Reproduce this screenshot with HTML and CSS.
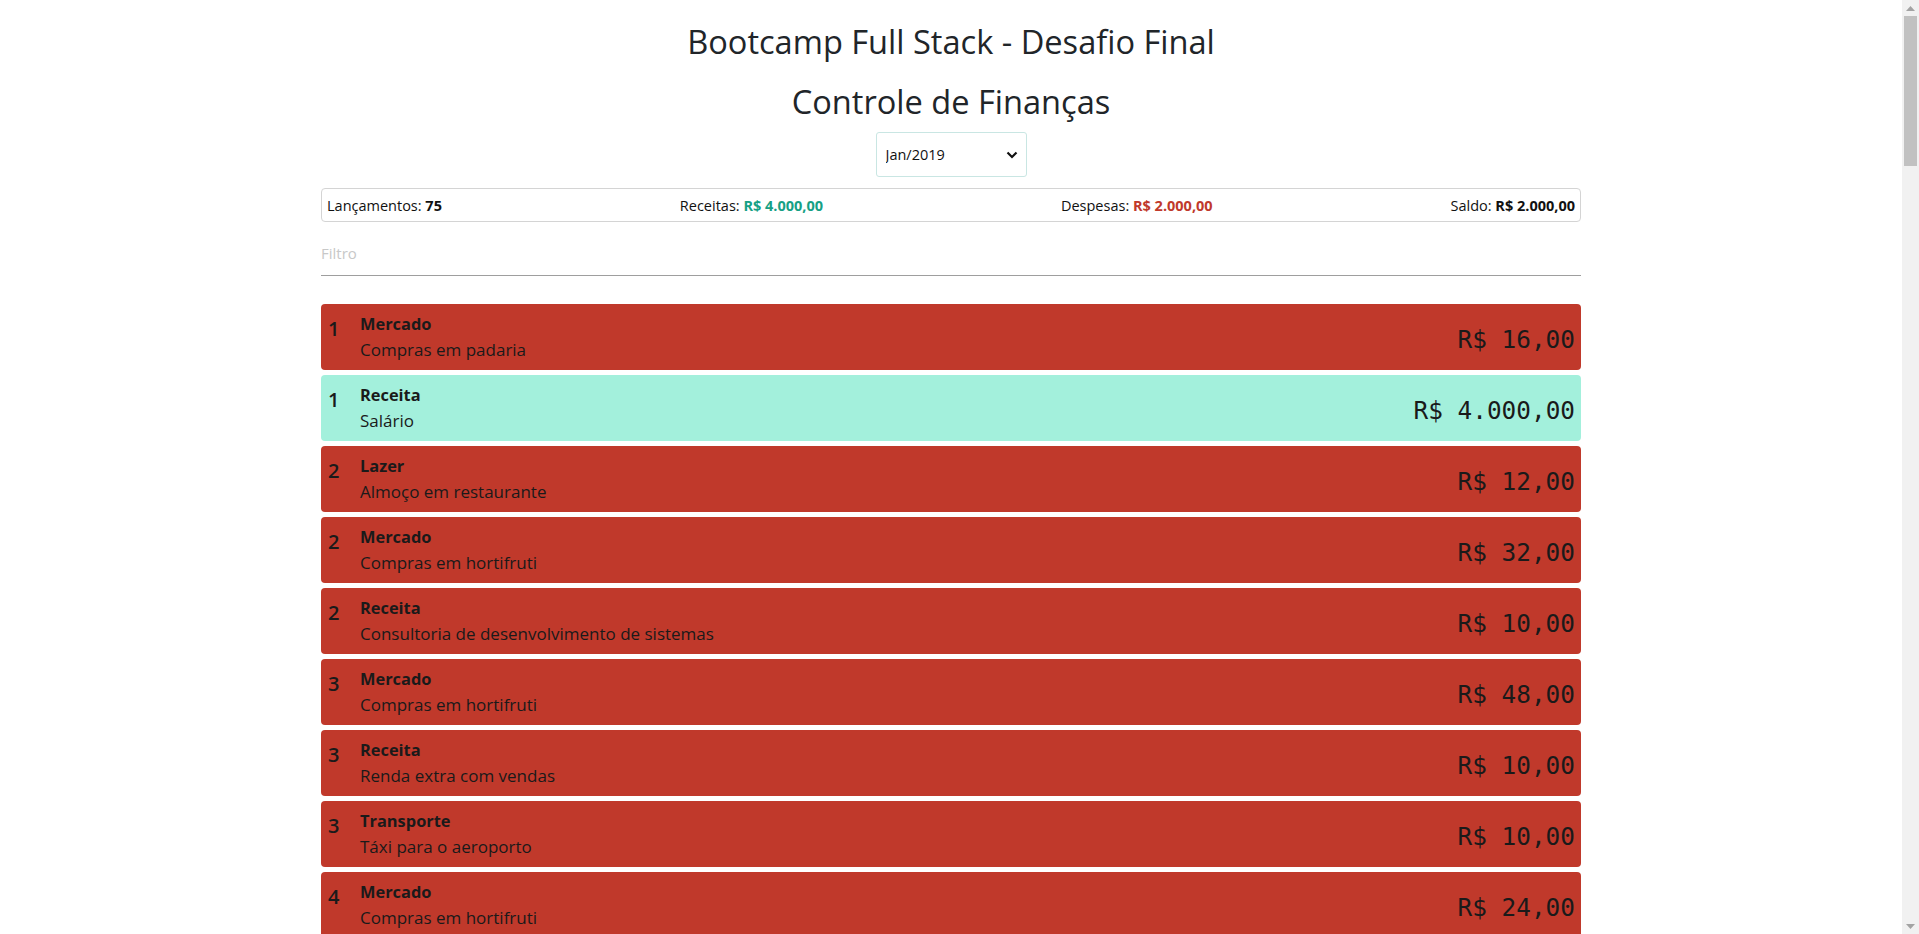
FILE: index.html
```html
<!DOCTYPE html>
<html lang="pt-BR">
<head>
<meta charset="utf-8">
<title>Controle de Finanças</title>
<link rel="stylesheet" href="styles.css">
</head>
<body>
<div class="app">
  <h1 class="title">Bootcamp Full Stack - Desafio Final</h1>
  <h2 class="title title-sub">Controle de Finanças</h2>
  <div class="period">
    <div class="select-wrap">
      <select class="select">
        <option>Jan/2019</option>
        <option>Fev/2019</option>
        <option>Mar/2019</option>
      </select>
      <svg class="chevron" width="12" height="8" viewBox="0 0 12 8"><path d="M1.5 1.5 L6 6 L10.5 1.5" fill="none" stroke="#111" stroke-width="2.2"/></svg>
    </div>
  </div>
  <div class="summary">
    <span>Lançamentos: <b>75</b></span>
    <span>Receitas: <b class="pos">R$ 4.000,00</b></span>
    <span>Despesas: <b class="neg">R$ 2.000,00</b></span>
    <span>Saldo: <b>R$ 2.000,00</b></span>
  </div>
  <div class="filter"><input class="filter-input" type="text" placeholder="Filtro"></div>
  <ul class="list">
    <li class="item exp"><span class="day">1</span><div class="info"><div class="cat">Mercado</div><div class="desc">Compras em padaria</div></div><span class="value">R$ 16,00</span></li>
    <li class="item inc"><span class="day">1</span><div class="info"><div class="cat">Receita</div><div class="desc">Salário</div></div><span class="value">R$ 4.000,00</span></li>
    <li class="item exp"><span class="day">2</span><div class="info"><div class="cat">Lazer</div><div class="desc">Almoço em restaurante</div></div><span class="value">R$ 12,00</span></li>
    <li class="item exp"><span class="day">2</span><div class="info"><div class="cat">Mercado</div><div class="desc">Compras em hortifruti</div></div><span class="value">R$ 32,00</span></li>
    <li class="item exp"><span class="day">2</span><div class="info"><div class="cat">Receita</div><div class="desc">Consultoria de desenvolvimento de sistemas</div></div><span class="value">R$ 10,00</span></li>
    <li class="item exp"><span class="day">3</span><div class="info"><div class="cat">Mercado</div><div class="desc">Compras em hortifruti</div></div><span class="value">R$ 48,00</span></li>
    <li class="item exp"><span class="day">3</span><div class="info"><div class="cat">Receita</div><div class="desc">Renda extra com vendas</div></div><span class="value">R$ 10,00</span></li>
    <li class="item exp"><span class="day">3</span><div class="info"><div class="cat">Transporte</div><div class="desc">Táxi para o aeroporto</div></div><span class="value">R$ 10,00</span></li>
    <li class="item exp"><span class="day">4</span><div class="info"><div class="cat">Mercado</div><div class="desc">Compras em hortifruti</div></div><span class="value">R$ 24,00</span></li>
    <li class="item exp"><span class="day">4</span><div class="info"><div class="cat">Saúde</div><div class="desc">Compras em farmácia</div></div><span class="value">R$ 36,00</span></li>
    <li class="item exp"><span class="day">5</span><div class="info"><div class="cat">Lazer</div><div class="desc">Cinema</div></div><span class="value">R$ 28,00</span></li>
    <li class="item exp"><span class="day">5</span><div class="info"><div class="cat">Mercado</div><div class="desc">Compras em supermercado</div></div><span class="value">R$ 64,00</span></li>
    <li class="item exp"><span class="day">6</span><div class="info"><div class="cat">Transporte</div><div class="desc">Combustível</div></div><span class="value">R$ 80,00</span></li>
    <li class="item exp"><span class="day">6</span><div class="info"><div class="cat">Mercado</div><div class="desc">Compras em padaria</div></div><span class="value">R$ 12,00</span></li>
    <li class="item exp"><span class="day">7</span><div class="info"><div class="cat">Lazer</div><div class="desc">Almoço em restaurante</div></div><span class="value">R$ 40,00</span></li>
    <li class="item exp"><span class="day">7</span><div class="info"><div class="cat">Receita</div><div class="desc">Renda extra com vendas</div></div><span class="value">R$ 20,00</span></li>
    <li class="item exp"><span class="day">8</span><div class="info"><div class="cat">Mercado</div><div class="desc">Compras em hortifruti</div></div><span class="value">R$ 16,00</span></li>
    <li class="item exp"><span class="day">8</span><div class="info"><div class="cat">Transporte</div><div class="desc">Táxi para o aeroporto</div></div><span class="value">R$ 30,00</span></li>
    <li class="item exp"><span class="day">9</span><div class="info"><div class="cat">Saúde</div><div class="desc">Consulta médica</div></div><span class="value">R$ 150,00</span></li>
    <li class="item exp"><span class="day">9</span><div class="info"><div class="cat">Mercado</div><div class="desc">Compras em supermercado</div></div><span class="value">R$ 72,00</span></li>
    <li class="item exp"><span class="day">10</span><div class="info"><div class="cat">Lazer</div><div class="desc">Cinema</div></div><span class="value">R$ 24,00</span></li>
    <li class="item exp"><span class="day">10</span><div class="info"><div class="cat">Receita</div><div class="desc">Consultoria de desenvolvimento de sistemas</div></div><span class="value">R$ 50,00</span></li>
    <li class="item exp"><span class="day">11</span><div class="info"><div class="cat">Mercado</div><div class="desc">Compras em padaria</div></div><span class="value">R$ 8,00</span></li>
    <li class="item exp"><span class="day">11</span><div class="info"><div class="cat">Transporte</div><div class="desc">Combustível</div></div><span class="value">R$ 60,00</span></li>
    <li class="item exp"><span class="day">12</span><div class="info"><div class="cat">Lazer</div><div class="desc">Almoço em restaurante</div></div><span class="value">R$ 36,00</span></li>
    <li class="item exp"><span class="day">12</span><div class="info"><div class="cat">Mercado</div><div class="desc">Compras em hortifruti</div></div><span class="value">R$ 20,00</span></li>
    <li class="item exp"><span class="day">13</span><div class="info"><div class="cat">Saúde</div><div class="desc">Compras em farmácia</div></div><span class="value">R$ 44,00</span></li>
    <li class="item exp"><span class="day">13</span><div class="info"><div class="cat">Receita</div><div class="desc">Renda extra com vendas</div></div><span class="value">R$ 30,00</span></li>
    <li class="item exp"><span class="day">14</span><div class="info"><div class="cat">Mercado</div><div class="desc">Compras em supermercado</div></div><span class="value">R$ 96,00</span></li>
    <li class="item exp"><span class="day">14</span><div class="info"><div class="cat">Transporte</div><div class="desc">Táxi para o aeroporto</div></div><span class="value">R$ 20,00</span></li>
    <li class="item exp"><span class="day">15</span><div class="info"><div class="cat">Lazer</div><div class="desc">Cinema</div></div><span class="value">R$ 32,00</span></li>
    <li class="item exp"><span class="day">15</span><div class="info"><div class="cat">Mercado</div><div class="desc">Compras em padaria</div></div><span class="value">R$ 14,00</span></li>
    <li class="item exp"><span class="day">16</span><div class="info"><div class="cat">Transporte</div><div class="desc">Combustível</div></div><span class="value">R$ 90,00</span></li>
    <li class="item exp"><span class="day">16</span><div class="info"><div class="cat">Mercado</div><div class="desc">Compras em hortifruti</div></div><span class="value">R$ 28,00</span></li>
    <li class="item exp"><span class="day">17</span><div class="info"><div class="cat">Receita</div><div class="desc">Consultoria de desenvolvimento de sistemas</div></div><span class="value">R$ 40,00</span></li>
    <li class="item exp"><span class="day">17</span><div class="info"><div class="cat">Lazer</div><div class="desc">Almoço em restaurante</div></div><span class="value">R$ 26,00</span></li>
    <li class="item exp"><span class="day">18</span><div class="info"><div class="cat">Mercado</div><div class="desc">Compras em supermercado</div></div><span class="value">R$ 58,00</span></li>
    <li class="item exp"><span class="day">18</span><div class="info"><div class="cat">Saúde</div><div class="desc">Compras em farmácia</div></div><span class="value">R$ 22,00</span></li>
    <li class="item exp"><span class="day">19</span><div class="info"><div class="cat">Transporte</div><div class="desc">Táxi para o aeroporto</div></div><span class="value">R$ 40,00</span></li>
    <li class="item exp"><span class="day">19</span><div class="info"><div class="cat">Mercado</div><div class="desc">Compras em padaria</div></div><span class="value">R$ 10,00</span></li>
    <li class="item exp"><span class="day">20</span><div class="info"><div class="cat">Lazer</div><div class="desc">Cinema</div></div><span class="value">R$ 30,00</span></li>
    <li class="item exp"><span class="day">20</span><div class="info"><div class="cat">Receita</div><div class="desc">Renda extra com vendas</div></div><span class="value">R$ 25,00</span></li>
    <li class="item exp"><span class="day">21</span><div class="info"><div class="cat">Mercado</div><div class="desc">Compras em hortifruti</div></div><span class="value">R$ 36,00</span></li>
    <li class="item exp"><span class="day">21</span><div class="info"><div class="cat">Transporte</div><div class="desc">Combustível</div></div><span class="value">R$ 70,00</span></li>
    <li class="item exp"><span class="day">22</span><div class="info"><div class="cat">Lazer</div><div class="desc">Almoço em restaurante</div></div><span class="value">R$ 34,00</span></li>
    <li class="item exp"><span class="day">22</span><div class="info"><div class="cat">Mercado</div><div class="desc">Compras em supermercado</div></div><span class="value">R$ 84,00</span></li>
    <li class="item exp"><span class="day">23</span><div class="info"><div class="cat">Saúde</div><div class="desc">Consulta médica</div></div><span class="value">R$ 120,00</span></li>
    <li class="item exp"><span class="day">23</span><div class="info"><div class="cat">Mercado</div><div class="desc">Compras em padaria</div></div><span class="value">R$ 18,00</span></li>
    <li class="item exp"><span class="day">24</span><div class="info"><div class="cat">Receita</div><div class="desc">Consultoria de desenvolvimento de sistemas</div></div><span class="value">R$ 60,00</span></li>
    <li class="item exp"><span class="day">24</span><div class="info"><div class="cat">Transporte</div><div class="desc">Táxi para o aeroporto</div></div><span class="value">R$ 24,00</span></li>
    <li class="item exp"><span class="day">25</span><div class="info"><div class="cat">Lazer</div><div class="desc">Cinema</div></div><span class="value">R$ 28,00</span></li>
    <li class="item exp"><span class="day">25</span><div class="info"><div class="cat">Mercado</div><div class="desc">Compras em hortifruti</div></div><span class="value">R$ 22,00</span></li>
    <li class="item exp"><span class="day">26</span><div class="info"><div class="cat">Mercado</div><div class="desc">Compras em supermercado</div></div><span class="value">R$ 76,00</span></li>
    <li class="item exp"><span class="day">26</span><div class="info"><div class="cat">Transporte</div><div class="desc">Combustível</div></div><span class="value">R$ 85,00</span></li>
    <li class="item exp"><span class="day">27</span><div class="info"><div class="cat">Receita</div><div class="desc">Renda extra com vendas</div></div><span class="value">R$ 15,00</span></li>
    <li class="item exp"><span class="day">27</span><div class="info"><div class="cat">Lazer</div><div class="desc">Almoço em restaurante</div></div><span class="value">R$ 38,00</span></li>
    <li class="item exp"><span class="day">27</span><div class="info"><div class="cat">Mercado</div><div class="desc">Compras em padaria</div></div><span class="value">R$ 12,00</span></li>
    <li class="item exp"><span class="day">28</span><div class="info"><div class="cat">Saúde</div><div class="desc">Compras em farmácia</div></div><span class="value">R$ 30,00</span></li>
    <li class="item exp"><span class="day">28</span><div class="info"><div class="cat">Mercado</div><div class="desc">Compras em hortifruti</div></div><span class="value">R$ 26,00</span></li>
    <li class="item exp"><span class="day">28</span><div class="info"><div class="cat">Transporte</div><div class="desc">Táxi para o aeroporto</div></div><span class="value">R$ 18,00</span></li>
    <li class="item exp"><span class="day">29</span><div class="info"><div class="cat">Lazer</div><div class="desc">Cinema</div></div><span class="value">R$ 24,00</span></li>
    <li class="item exp"><span class="day">29</span><div class="info"><div class="cat">Mercado</div><div class="desc">Compras em supermercado</div></div><span class="value">R$ 68,00</span></li>
    <li class="item exp"><span class="day">29</span><div class="info"><div class="cat">Receita</div><div class="desc">Consultoria de desenvolvimento de sistemas</div></div><span class="value">R$ 45,00</span></li>
    <li class="item exp"><span class="day">30</span><div class="info"><div class="cat">Mercado</div><div class="desc">Compras em padaria</div></div><span class="value">R$ 16,00</span></li>
    <li class="item exp"><span class="day">30</span><div class="info"><div class="cat">Transporte</div><div class="desc">Combustível</div></div><span class="value">R$ 75,00</span></li>
    <li class="item exp"><span class="day">30</span><div class="info"><div class="cat">Lazer</div><div class="desc">Almoço em restaurante</div></div><span class="value">R$ 42,00</span></li>
    <li class="item exp"><span class="day">30</span><div class="info"><div class="cat">Saúde</div><div class="desc">Compras em farmácia</div></div><span class="value">R$ 26,00</span></li>
    <li class="item exp"><span class="day">31</span><div class="info"><div class="cat">Mercado</div><div class="desc">Compras em hortifruti</div></div><span class="value">R$ 34,00</span></li>
    <li class="item exp"><span class="day">31</span><div class="info"><div class="cat">Receita</div><div class="desc">Renda extra com vendas</div></div><span class="value">R$ 20,00</span></li>
    <li class="item exp"><span class="day">31</span><div class="info"><div class="cat">Transporte</div><div class="desc">Táxi para o aeroporto</div></div><span class="value">R$ 22,00</span></li>
    <li class="item exp"><span class="day">31</span><div class="info"><div class="cat">Lazer</div><div class="desc">Cinema</div></div><span class="value">R$ 30,00</span></li>
    <li class="item exp"><span class="day">31</span><div class="info"><div class="cat">Mercado</div><div class="desc">Compras em supermercado</div></div><span class="value">R$ 90,00</span></li>
    <li class="item exp"><span class="day">31</span><div class="info"><div class="cat">Mercado</div><div class="desc">Compras em padaria</div></div><span class="value">R$ 14,00</span></li>
    <li class="item exp"><span class="day">31</span><div class="info"><div class="cat">Saúde</div><div class="desc">Consulta médica</div></div><span class="value">R$ 100,00</span></li>
  </ul>
</div>
<div class="scrollbar" aria-hidden="true">
  <div class="sb-arrow"><svg width="9" height="5" viewBox="0 0 9 5"><path d="M0 5 L4.5 0 L9 5 Z" fill="#a3a3a3"/></svg></div>
  <div class="sb-track"><div class="sb-thumb"></div></div>
  <div class="sb-arrow"><svg width="9" height="5" viewBox="0 0 9 5"><path d="M0 0 L4.5 5 L9 0 Z" fill="#a3a3a3"/></svg></div>
</div>
</body>
</html>
```

FILE: styles.css
```css
body {
  margin: 0;
  padding-right: 17px;
  font-family: "Open Sans", "Noto Sans", sans-serif;
  color: #212529;
  background: #fff;
}
.app {
  width: 1260px;
  margin: 0 auto;
  padding-top: 22px;
}
.title {
  margin: 0;
  font-size: 32.6px;
  line-height: 40px;
  font-weight: 400;
  text-align: center;
  color: #212529;
}
.title-sub {
  margin-top: 20px;
}
.period {
  display: flex;
  justify-content: center;
  margin-top: 10px;
}
.select-wrap {
  position: relative;
  width: 151px;
  height: 45px;
}
.select {
  appearance: none;
  -webkit-appearance: none;
  width: 100%;
  height: 100%;
  box-sizing: border-box;
  border: 1px solid #c9e6e3;
  border-radius: 3px;
  background: #fff;
  padding: 0 0 0 9px;
  font-family: "Open Sans", sans-serif;
  font-size: 14.5px;
  color: #111;
}
.chevron {
  position: absolute;
  right: 9px;
  top: 19px;
  pointer-events: none;
}
.summary {
  margin-top: 11px;
  height: 34px;
  box-sizing: border-box;
  border: 1px solid #d4d4d4;
  border-radius: 4px;
  padding: 0 5px;
  display: flex;
  justify-content: space-between;
  align-items: center;
  font-size: 14.5px;
  color: #111;
}
.summary b {
  font-weight: 700;
}
.pos { color: #16a085; }
.neg { color: #c0392b; }
.filter {
  margin-top: 9px;
}
.filter-input {
  display: block;
  width: 100%;
  box-sizing: border-box;
  height: 45px;
  border: none;
  border-bottom: 1px solid #9e9e9e;
  outline: none;
  padding: 0;
  font-family: "Open Sans", sans-serif;
  font-size: 15px;
  background: transparent;
}
.filter-input::placeholder {
  color: #c8c8c8;
}
.list {
  list-style: none;
  margin: 28px 0 0;
  padding: 0;
}
.item {
  display: flex;
  align-items: flex-start;
  height: 66px;
  box-sizing: border-box;
  margin-bottom: 5px;
  border-radius: 4px;
  padding: 8px 6px 0 7px;
  color: #1a1a1a;
}
.exp { background: #c0392b; }
.inc { background: #a3f0dc; }
.day {
  width: 32px;
  font-size: 20px;
  font-weight: 600;
  line-height: 28px;
  margin-top: 3px;
}
.info {
  flex: 1;
}
.cat {
  font-weight: 700;
  font-size: 16.4px;
  line-height: 24px;
}
.desc {
  font-size: 17px;
  line-height: 28px;
}
.value {
  align-self: center;
  margin-top: -4px;
  font-family: "DejaVu Sans Mono", "Liberation Mono", monospace;
  font-size: 24.4px;
}
.scrollbar {
  position: fixed;
  top: 0;
  right: 0;
  width: 17px;
  height: 100vh;
  background: #f1f1f1;
  display: flex;
  flex-direction: column;
}
.sb-arrow {
  height: 16px;
  display: flex;
  align-items: center;
  justify-content: center;
}
.sb-track {
  flex: 1;
  padding: 0 2px;
}
.sb-thumb {
  height: 150px;
  background: #c1c1c1;
}
```
